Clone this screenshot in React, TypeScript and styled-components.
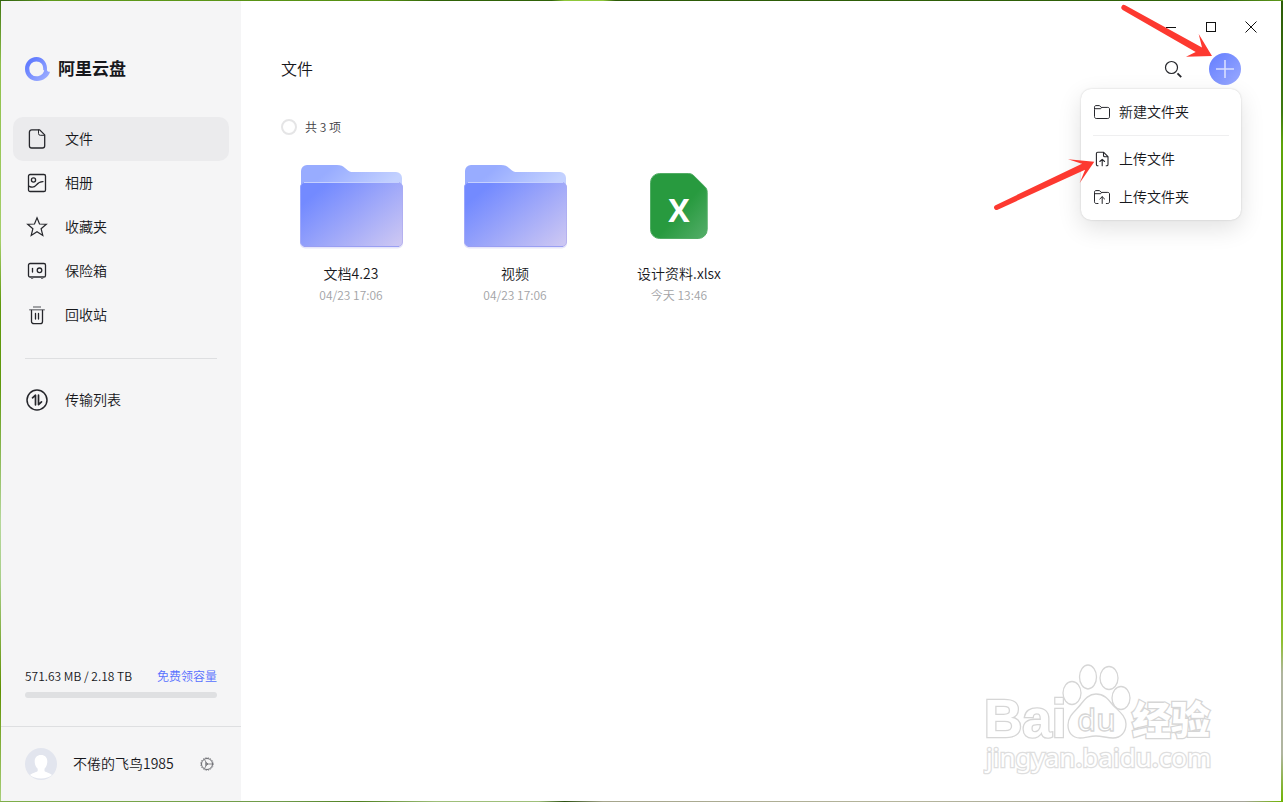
import React from "react";
import styled, { createGlobalStyle } from "styled-components";

const ink = "#25262b";

const GlobalStyle = createGlobalStyle`
  *, *::before, *::after { box-sizing: border-box; }
  body {
    margin: 0;
    color: #17181c;
    font-family: "Noto Sans CJK SC", sans-serif;
    font-size: 14px;
    font-weight: 350;
    line-height: 20px;
  }
  button {
    margin: 0;
    padding: 0;
    border: 0;
    background: none;
    color: inherit;
    font: inherit;
    cursor: pointer;
  }
  a { color: inherit; text-decoration: none; }
  svg { display: block; flex: none; }
`;

const Desktop = styled.div`
  display: flex;
  position: relative;
  min-height: 100vh;
  padding: 1px 2px 1px 1px;
  background:
    linear-gradient(90deg, #2f5f10, #5f9a1c 4%, #558f12 30%, #2f6208 34%, #2f6208 43%, #8fc83a 44%, #8fc83a 47%, #2c5a08 48%, #2f6208 95%, #5f9a1c) top / 100% 1px no-repeat,
    linear-gradient(90deg, #7fae4a 0, #6f9a4a 22%, #4f8020 28%, #9fbf7a 34%, #9fbf7a 42%, #2c5010 44%, #a5a58c 47%, #b5b59c 70%, #a5a59a 97%, #6fb400) bottom / 100% 1px no-repeat,
    linear-gradient(180deg, #3f7410, #8fc04a 8%, #a5cf6a 30%, #5f980c 38%, #5f980c 48%, #b5d79a 65%, #a9cf8a 72%, #5f9000 86%, #a9cf7a) left / 50% 100% no-repeat,
    linear-gradient(180deg, #2c5a08, #3f7a10 14%, #5fa50a 18%, #5fa500 62%, #8fc030 80%, #b0b5a0 84%, #b0b5a0 94%, #6fb400) right / 50% 100% no-repeat;
`;

const Label = styled.span`
  padding-bottom: 2px;
`;

const Sidebar = styled.aside`
  display: flex;
  flex: none;
  flex-direction: column;
  width: 240px;
  background: #f5f5f6;
`;

const Brand = styled.a`
  display: flex;
  align-items: center;
  gap: 8px;
  height: 24px;
  margin: 56px 24px 36px;
  font-size: 17px;
  font-weight: 700;
`;

const Nav = styled.nav`
  display: flex;
  flex-direction: column;
  padding: 0 12px;
`;

const NavItem = styled.a<{ $active?: boolean }>`
  display: flex;
  align-items: center;
  gap: 16px;
  height: 44px;
  padding: 0 12px;
  border-radius: 10px;
  background: ${(p) => (p.$active ? "#ebebed" : "transparent")};
`;

const Divider = styled.hr`
  width: 192px;
  height: 1px;
  margin: 21px 24px 19px;
  border: 0;
  background: #dedfe1;
`;

const Quota = styled.section`
  display: flex;
  flex-direction: column;
  gap: 6px;
  margin-top: auto;
  padding: 0 24px 28px;
  font-size: 12px;
`;

const QuotaRow = styled.div`
  display: flex;
  justify-content: space-between;
`;

const QuotaLink = styled.a`
  color: #566fff;
`;

const QuotaBar = styled.div`
  height: 6px;
  border-radius: 3px;
  background: #dfe0e2;
`;

const UserRow = styled.footer`
  display: flex;
  align-items: center;
  height: 75px;
  padding: 0 24px;
  border-top: 1px solid #dedfe1;
`;

const UserName = styled(Label)`
  flex: 1;
  margin-left: 16px;
`;

const SettingsButton = styled.button`
  padding: 2px;
`;

const Main = styled.main`
  display: flex;
  flex: 1;
  flex-direction: column;
  position: relative;
  min-width: 0;
  padding: 6px 40px 40px;
  background: #fff;
`;

const WindowBar = styled.div`
  display: flex;
  justify-content: flex-end;
  margin-right: -30px;
`;

const WindowButton = styled.button`
  display: grid;
  place-items: center;
  width: 40px;
  height: 40px;
`;

const Header = styled.header`
  display: flex;
  align-items: center;
  position: relative;
  height: 44px;
`;

const Title = styled.h1`
  flex: 1;
  margin: 0;
  padding-bottom: 2px;
  font-size: 16px;
  font-weight: 350;
`;

const SearchButton = styled.button`
  display: grid;
  place-items: center;
  width: 32px;
  height: 32px;
  margin-right: 20px;
`;

const AddButton = styled.button`
  display: grid;
  place-items: center;
  width: 32px;
  height: 32px;
  border-radius: 50%;
  background: linear-gradient(135deg, #637dff, #9babff);
`;

const Menu = styled.div`
  display: flex;
  flex-direction: column;
  position: absolute;
  top: 42px;
  right: 0;
  width: 160px;
  padding: 4px 0;
  border-radius: 10px;
  background: #fff;
  box-shadow: 0 0 2px rgba(0, 0, 0, 0.18), 0 8px 24px rgba(0, 0, 0, 0.12);
`;

const MenuItem = styled.button`
  display: flex;
  align-items: center;
  gap: 8px;
  height: 38px;
  padding: 0 12px;
`;

const MenuDivider = styled.hr`
  height: 1px;
  margin: 4px 12px;
  border: 0;
  background: #efeff0;
`;

const Summary = styled.label`
  display: flex;
  align-items: center;
  gap: 8px;
  height: 20px;
  margin-top: 26px;
  color: #3f4045;
  font-size: 12px;
`;

const SelectAll = styled.input`
  appearance: none;
  width: 16px;
  height: 16px;
  margin: 0;
  border: 2px solid #e5e5e6;
  border-radius: 50%;
`;

const FileGrid = styled.ul`
  display: grid;
  grid-template-columns: repeat(auto-fill, 140px);
  gap: 24px;
  margin: 16px 0 0;
  padding: 0;
  list-style: none;
`;

const FileCard = styled.li`
  display: flex;
  flex-direction: column;
  align-items: center;
`;

const Thumb = styled.div`
  display: grid;
  place-items: center;
  height: 106px;
  margin-bottom: 4px;
`;

const FileName = styled.span`
  line-height: 20px;
`;

const FileDate = styled.time`
  color: #a2a3a6;
  font-size: 12px;
  line-height: 24px;
`;

const Arrows = styled.svg`
  position: absolute;
  top: 0;
  right: 0;
  pointer-events: none;
`;

const Watermark = styled.svg`
  position: absolute;
  right: 60px;
  bottom: 22px;
  pointer-events: none;
`;

const Line = ({ children, size = 24 }: { children: React.ReactNode; size?: number }) => (
  <svg
    width={size}
    height={size}
    viewBox={`0 0 ${size} ${size}`}
    fill="none"
    stroke={ink}
    strokeWidth="1.3"
    strokeLinecap="round"
    strokeLinejoin="round"
    aria-hidden="true"
  >
    {children}
  </svg>
);

const FileIcon = () => (
  <Line>
    <path d="M6.700 2.900h8l5 5v10.800a2.300 2.300 0 0 1-2.300 2.300H6.700a2.300 2.300 0 0 1-2.300-2.300V5.200a2.300 2.300 0 0 1 2.300-2.300z" />
    <path d="M13.500 3v3.500a1.800 1.800 0 0 0 1.800 1.800h4.200" strokeWidth="1" />
  </Line>
);

const AlbumIcon = () => (
  <Line>
    <rect x="3.500" y="3.500" width="17" height="17" rx="1.600" />
    <circle cx="8.500" cy="9" r="2.100" />
    <path d="M4.200 15.300c3.300 1.500 5.300.9 7-1.200 2-2.400 3.600-3.600 6.800-3.500" />
  </Line>
);

const StarIcon = () => (
  <Line>
    <path d="M12 2.800l2.500 6.200 6.800.2-5.200 4.500 1.700 6.700L12 16.700l-5.800 3.700 1.700-6.700-5.200-4.500 6.800-.2z" strokeLinejoin="miter" strokeWidth="1.200" />
  </Line>
);

const SafeIcon = () => (
  <Line>
    <rect x="3.500" y="4.500" width="17" height="13.500" rx="1.600" />
    <circle cx="14.500" cy="11.300" r="2.300" />
    <path d="M7.500 9.500v3.600" />
    <path d="M6 19.300h2.200M16 19.300h2.200" stroke="#77787c" strokeLinecap="butt" strokeWidth="1.600" />
  </Line>
);

const TrashIcon = () => (
  <Line>
    <path d="M8 4h8M4.200 6.700h15.600" stroke="#85868a" strokeLinecap="butt" strokeWidth="1.600" />
    <path d="M6.500 7.400v11a2.300 2.300 0 0 0 2.300 2.300h6.400a2.300 2.300 0 0 0 2.300-2.300v-11M10.500 10.500v5.500M13.500 10.500v5.500" />
  </Line>
);

const TransferIcon = () => (
  <Line>
    <circle cx="12" cy="12" r="10" strokeWidth="1.500" />
    <path d="M7.500 9.800l3-2.600v9.600M13.500 7.200v9.400l3-2.800" strokeWidth="1.700" />
  </Line>
);

const NewFolderIcon = () => (
  <Line size={18}>
    <path d="M1.500 6V4.200c0-1 .5-1.600 1.500-1.600h3.500l1.700 1.800h6.600c1 0 1.700.6 1.700 1.600v7.800c0 1-.7 1.700-1.700 1.700H3.200c-1 0-1.700-.7-1.700-1.700zM1.500 5.700h6.200l.8-1" strokeWidth="1" />
  </Line>
);

const UploadFileIcon = () => (
  <Line size={18}>
    <path d="M5 15.800h-.3c-.8 0-1.300-.5-1.300-1.300V3.600c0-.8.500-1.300 1.300-1.300h6L15 6.700v7.800c0 .8-.5 1.300-1.300 1.300h-.5M10.500 2.500v3c0 .8.400 1.300 1.300 1.300H15M9.200 15.800V9.500M6.800 11.500l2.400-2.200 2.400 2.200" strokeWidth="1.100" />
  </Line>
);

const UploadFolderIcon = () => (
  <Line size={18}>
    <path d="M5 15.500H3.200c-1 0-1.700-.7-1.700-1.700V4.200c0-1 .5-1.600 1.500-1.600h3.500l1.700 1.800h6.600c1 0 1.700.6 1.700 1.600v7.800c0 1-.7 1.700-1.700 1.700h-1.500M1.500 5.700h6.200l.8-1M9.200 15.500V8.800M6.800 11l2.400-2.300 2.400 2.300" strokeWidth="1" />
  </Line>
);

const LogoMark = () => (
  <svg width="25" height="24" viewBox="0 0 25 24" aria-hidden="true">
    <defs>
      <linearGradient id="logo" x1="0" y1="0" x2="1" y2="1">
        <stop offset="0.200" stopColor="#637dff" />
        <stop offset="1" stopColor="#a5b4ff" />
      </linearGradient>
    </defs>
    <path
      fill="url(#logo)"
      d="M22 13.300C22.800 6 18 0 11.500 0 5 0 0 5.300 0 12s5.300 12 12 12c6.300 0 11.500-4 13-9.200-1.300.2-2.400-.3-3-1.500zM11.300 4.500c4.300 0 7 3 6.900 7.200 0 1-.2 1.400 1 1.600-.6 3.400-3.600 6-7.500 6a7.300 7.300 0 0 1-7.400-7.500c0-4.100 3-7.300 7-7.300z"
      fillRule="evenodd"
    />
  </svg>
);

const FolderArt = () => (
  <svg width="106" height="88" viewBox="1 0 106 88" aria-hidden="true">
    <defs>
      <linearGradient id="folderBack" x1="0" y1="0" x2="1" y2="0.300">
        <stop offset="0.300" stopColor="#98acff" />
        <stop offset="1" stopColor="#c3d1ff" />
      </linearGradient>
      <linearGradient id="folderFront" x1="0" y1="0.150" x2="1" y2="0.900">
        <stop offset="0.100" stopColor="#738aff" />
        <stop offset="1" stopColor="#cbc6f3" />
      </linearGradient>
      <linearGradient id="folderEdge" x1="0" y1="0" x2="1" y2="1">
        <stop offset="0" stopColor="#93a3ff" />
        <stop offset="1" stopColor="#b9b3ee" />
      </linearGradient>
    </defs>
    <path fill="url(#folderBack)" d="M4 30V9a6 6 0 0 1 6-6h30c4 0 6 1 8 3l3 2.500c1.500 1.200 3 1.500 5 1.500h43a6 6 0 0 1 6 6v14z" />
    <rect x="3" y="21" width="103" height="65.500" rx="5" fill="#e6e6fa" />
    <rect x="3.500" y="20.500" width="102" height="64" rx="4.500" fill="url(#folderFront)" stroke="url(#folderEdge)" />
    <path d="M7 20.500h95" stroke="#c5d0ff" />
    <path d="M7 84.500h95" stroke="#9a9ff3" />
  </svg>
);

const SheetArt = () => (
  <svg width="58" height="66" viewBox="0 0 58 66" aria-hidden="true">
    <defs>
      <linearGradient id="sheet" x1="0" y1="0" x2="1" y2="1">
        <stop offset="0.550" stopColor="#289a3f" />
        <stop offset="1" stopColor="#55ae6a" />
      </linearGradient>
    </defs>
    <path
      fill="url(#sheet)"
      stroke="#52ad65"
      d="M9.500.5h28.800c2.300 0 4 .7 5.600 2.300l10.800 10.700c1.700 1.700 2.500 3.300 2.500 5.800v37.200a9 9 0 0 1-9 9H9.500a9 9 0 0 1-9-9v-47a9 9 0 0 1 9-9z"
    />
    <text x="29" y="49" textAnchor="middle" fill="#fff" fontFamily="Open Sans, sans-serif" fontWeight="700" fontSize="32">X</text>
  </svg>
);

const navItems = [
  { label: "文件", icon: <FileIcon />, active: true },
  { label: "相册", icon: <AlbumIcon /> },
  { label: "收藏夹", icon: <StarIcon /> },
  { label: "保险箱", icon: <SafeIcon /> },
  { label: "回收站", icon: <TrashIcon /> },
];

const files = [
  { name: "文档4.23", date: "04/23 17:06", art: <FolderArt /> },
  { name: "视频", date: "04/23 17:06", art: <FolderArt /> },
  { name: "设计资料.xlsx", date: "今天 13:46", art: <SheetArt /> },
];

export default function App() {
  return (
    <>
      <GlobalStyle />
      <Desktop>
        <Sidebar>
          <Brand href="#">
            <LogoMark />
            <Label>阿里云盘</Label>
          </Brand>
          <Nav>
            {navItems.map((item) => (
              <NavItem key={item.label} href="#" $active={item.active}>
                {item.icon}
                <Label>{item.label}</Label>
              </NavItem>
            ))}
          </Nav>
          <Divider />
          <Nav>
            <NavItem href="#">
              <TransferIcon />
              <Label>传输列表</Label>
            </NavItem>
          </Nav>
          <Quota>
            <QuotaRow>
              <span>571.63 MB / 2.18 TB</span>
              <QuotaLink href="#">免费领容量</QuotaLink>
            </QuotaRow>
            <QuotaBar />
          </Quota>
          <UserRow>
            <svg width="32" height="32" viewBox="0 0 32 32" aria-hidden="true">
              <circle cx="16" cy="16" r="16" fill="#e2e5ee" />
              <path fill="#fff" d="M16 7c4 0 6.300 2.500 6.300 6.500 0 3.300-1.300 5.600-2.800 7.200v2c0 1.500 5 1.800 7.500 4.300-2.500 2.300-6.500 3.500-11 3.500S7.500 29.300 5 27c2.500-2.500 7.700-2.800 7.700-4.300v-2c-1.700-1.600-3-3.900-3-7.200C9.700 9.500 12 7 16 7z" />
            </svg>
            <UserName>不倦的飞鸟1985</UserName>
            <SettingsButton aria-label="设置">
              <svg width="16" height="16" viewBox="0 0 16 16" fill="none" stroke="#6a6b70" aria-hidden="true">
                <circle cx="8" cy="8" r="5.500" strokeWidth="1" />
                <circle cx="8" cy="8" r="6.300" strokeDasharray="1.200 1.275" strokeWidth="0.800" />
                <path d="M5.500 3.500L8 8l-2.500 4.500M8 8h5.500M6.700 6.500v3L9 8z" strokeWidth="0.800" />
              </svg>
            </SettingsButton>
          </UserRow>
        </Sidebar>

        <Main>
          <WindowBar>
            <WindowButton aria-label="最小化">
              <svg width="12" height="12" stroke="#111"><path d="M1 6.500h10" /></svg>
            </WindowButton>
            <WindowButton aria-label="最大化">
              <svg width="12" height="12" stroke="#111" fill="none"><rect x="1.500" y="1.500" width="9" height="9" /></svg>
            </WindowButton>
            <WindowButton aria-label="关闭">
              <svg width="12" height="12" stroke="#111"><path d="M.5.5l11 11M11.500.5l-11 11" /></svg>
            </WindowButton>
          </WindowBar>
          <Header>
            <Title>文件</Title>
            <SearchButton aria-label="搜索">
              <svg width="18" height="18" viewBox="0 0 18 18" fill="none" stroke={ink} aria-hidden="true">
                <circle cx="7.500" cy="7.500" r="6" strokeWidth="1.200" />
                <path d="M13.500 13.300l3.700 3.900" strokeWidth="1.800" />
              </svg>
            </SearchButton>
            <AddButton aria-label="添加" aria-expanded="true">
              <svg width="18" height="18" stroke="#d8deff" strokeWidth="1.600" aria-hidden="true">
                <path d="M9 0v18M0 9h18" />
              </svg>
            </AddButton>
            <Menu role="menu">
              <MenuItem role="menuitem"><NewFolderIcon /><Label>新建文件夹</Label></MenuItem>
              <MenuDivider />
              <MenuItem role="menuitem"><UploadFileIcon /><Label>上传文件</Label></MenuItem>
              <MenuItem role="menuitem"><UploadFolderIcon /><Label>上传文件夹</Label></MenuItem>
            </Menu>
          </Header>
          <Summary>
            <SelectAll type="checkbox" />
            共 3 项
          </Summary>
          <FileGrid>
            {files.map((file) => (
              <FileCard key={file.name}>
                <Thumb>{file.art}</Thumb>
                <FileName>{file.name}</FileName>
                <FileDate>{file.date}</FileDate>
              </FileCard>
            ))}
          </FileGrid>
        </Main>

        <Arrows width="303" height="220" viewBox="980 0 303 220" fill="#fd3930" aria-hidden="true">
          <path d="M1125.200 5.300L1202 47.500l-3.300-13.500L1212 56l-26 .8 9.700-4.900-73-42a2.600 2.600 0 0 1 2.500-4.600z" />
          <path d="M995 205.400L1082 163.800l-14-4.600 26.300 2.500-14.600 21.300 5.400-13.200-88 40.200a2.600 2.600 0 0 1-2.100-4.600z" />
        </Arrows>

        <Watermark width="240" height="120" viewBox="983 660 240 120" fill="#fff" stroke="#d6d6d6" strokeWidth="1.300" aria-hidden="true">
          <g strokeWidth="2.600" paintOrder="stroke">
            <text x="984" y="737" fontFamily="Liberation Sans" fontWeight="700" fontSize="53">Bai</text>
            <text x="1132" y="734" fontFamily="Noto Sans CJK SC" fontWeight="900" fontSize="39">经验</text>
            <text x="986" y="767" fontFamily="Noto Sans" fontWeight="400" fontSize="26" stroke="#dedede">jingyan.baidu.com</text>
          </g>
          <ellipse cx="1072" cy="693" rx="9" ry="11.500" />
          <ellipse cx="1088" cy="677" rx="8.500" ry="12" />
          <ellipse cx="1109" cy="678" rx="9" ry="11.500" />
          <ellipse cx="1121" cy="698" rx="9" ry="11.500" />
          <path d="M1096 694c8 0 12 5 16 10 5 6 14 11 14 20 0 8-5 14-13 14-6 0-11-2-17-2s-11 2-16 2c-8 0-12-6-12-13 0-10 8-14 13-21 4-5 8-10 15-10z" />
          <text x="1077" y="731" fontFamily="Noto Sans" fontWeight="500" fontSize="31">du</text>
        </Watermark>
      </Desktop>
    </>
  );
}
